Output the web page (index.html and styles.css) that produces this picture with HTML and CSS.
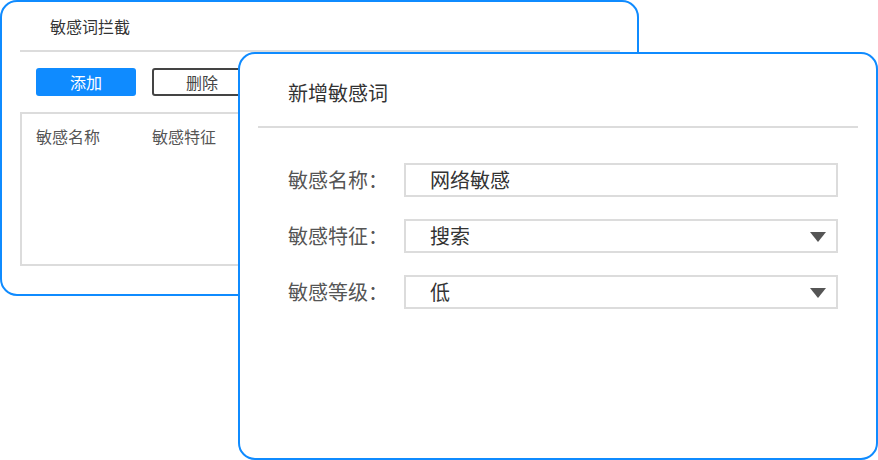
FILE: index.html
```html
<!DOCTYPE html>
<html lang="zh-CN">
<head>
<meta charset="utf-8">
<title>敏感词拦截</title>
<link rel="stylesheet" href="styles.css">
</head>
<body>
<div class="canvas">
  <section class="card card-back">
    <div class="back-title">敏感词拦截</div>
    <div class="divider back-divider"></div>
    <div class="toolbar">
      <button class="btn btn-primary">添加</button>
      <button class="btn btn-outline">删除</button>
    </div>
    <div class="table">
      <div class="table-head">
        <span class="th">敏感名称</span>
        <span class="th">敏感特征</span>
      </div>
    </div>
  </section>

  <section class="card card-front">
    <div class="front-title">新增敏感词</div>
    <div class="divider front-divider"></div>
    <div class="form">
      <div class="form-row">
        <label class="form-label">敏感名称：</label>
        <div class="field"><span class="field-text">网络敏感</span></div>
      </div>
      <div class="form-row">
        <label class="form-label">敏感特征：</label>
        <div class="field field-select"><span class="field-text">搜索</span><span class="caret"></span></div>
      </div>
      <div class="form-row">
        <label class="form-label">敏感等级：</label>
        <div class="field field-select"><span class="field-text">低</span><span class="caret"></span></div>
      </div>
    </div>
  </section>
</div>
</body>
</html>
```

FILE: styles.css
```css
* { box-sizing: border-box; }

html, body {
  margin: 0;
  padding: 0;
  background: #ffffff;
}

body {
  font-family: "Noto Sans CJK SC", "Noto Sans", sans-serif;
  color: #333333;
}

.canvas {
  position: relative;
  width: 878px;
  height: 460px;
  overflow: hidden;
}

.card {
  position: absolute;
  background: #ffffff;
  border: 2px solid #0f8bff;
  border-radius: 17px;
}

.card-back {
  left: 0;
  top: 0;
  width: 639px;
  height: 296px;
}

.card-front {
  left: 238px;
  top: 52px;
  width: 640px;
  height: 408px;
}

.divider {
  height: 2px;
  background: #dcdcdc;
}

/* back card */
.back-title {
  height: 48px;
  line-height: 48px;
  padding-left: 48px;
  font-size: 16px;
  color: #333333;
}

.back-divider {
  margin: 0 17px 0 18px;
}

.toolbar {
  display: flex;
  gap: 16px;
  margin-top: 16px;
  padding-left: 34px;
}

.btn {
  width: 100px;
  height: 28px;
  padding: 0;
  border-radius: 3px;
  font-family: inherit;
  font-size: 16px;
  line-height: 24px;
}

.btn-primary {
  background: #0f8bff;
  border: 0;
  color: #ffffff;
}

.btn-outline {
  background: #ffffff;
  border: 2px solid #444444;
  color: #444444;
}

.table {
  margin: 16px 17px 0 18px;
  height: 154px;
  border: 2px solid #dcdcdc;
}

.table-head {
  display: flex;
  padding: 12px 0 0 14px;
}

.th {
  width: 116px;
  font-size: 16px;
  line-height: 20px;
  color: #555555;
}

/* front card */
.front-title {
  padding: 24px 0 18px 48px;
  line-height: 30px;
  font-size: 20px;
  color: #333333;
}

.front-divider {
  margin: 0 18px;
}

.form {
  display: flex;
  flex-direction: column;
  gap: 22px;
  padding: 35px 38px 0 48px;
}

.form-row {
  display: flex;
  align-items: center;
  height: 34px;
}

.form-label {
  width: 116px;
  font-size: 20px;
  line-height: 28px;
  color: #555555;
}

.field {
  flex: 1;
  height: 34px;
  display: flex;
  align-items: center;
  justify-content: space-between;
  border: 2px solid #dcdcdc;
  padding: 0 10px 0 24px;
}

.field-text {
  font-size: 20px;
  line-height: 28px;
  color: #333333;
}

.caret {
  width: 0;
  height: 0;
  border-left: 8px solid transparent;
  border-right: 8px solid transparent;
  border-top: 10px solid #555555;
  margin-top: 2px;
}
```
